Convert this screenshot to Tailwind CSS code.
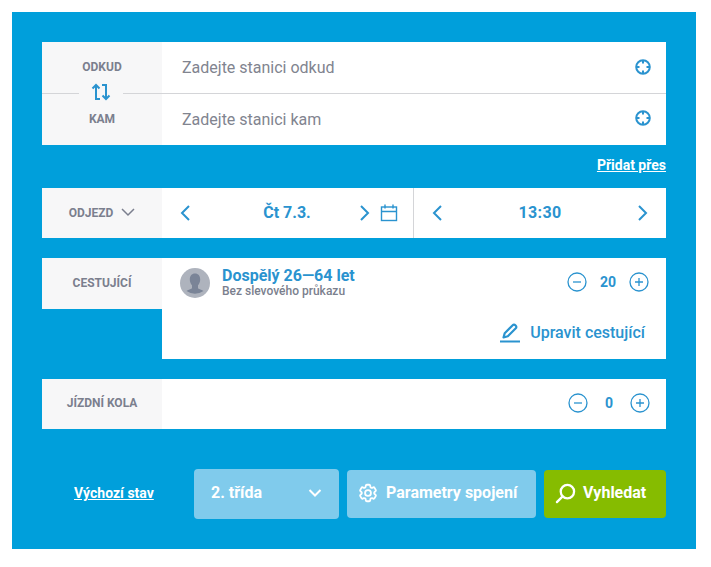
<!DOCTYPE html>
<html lang="cs">

<head>
    <meta charset="UTF-8">
    <meta name="viewport" content="width=device-width, initial-scale=1.0">
    <title>Vyhledání spojení</title>
    <script src="https://cdn.jsdelivr.net/npm/@tailwindcss/browser@4"></script>
</head>

<body class="bg-white font-['Roboto',sans-serif]">
    <div class="pt-3 pl-3">
        <form class="w-[684px] h-[537px] bg-[#009fdb] px-[30px] pt-[30px]">

            <!-- odkud / kam -->
            <div class="relative flex h-[103px] bg-white">
                <div class="w-[120px] bg-[#f7f7f8] flex flex-col text-xs font-bold text-[#7b7f8e]">
                    <div class="h-[51px] flex items-center justify-center pb-[2px]">ODKUD</div>
                    <div class="h-[52px] flex items-center justify-center">KAM</div>
                </div>
                <div class="flex-1 flex flex-col text-base text-[#81848f]">
                    <div class="h-[51px] flex items-center justify-between pl-5 pr-[15px]">
                        <span>Zadejte stanici odkud</span>
                        <svg class="w-4 h-4 mt-[-1px]" viewBox="0 0 16 16" fill="none" stroke="#2a93cf" stroke-width="2"><circle cx="8" cy="8" r="6.800"/><path d="M8 1v3.500M8 11.500V15M1 8h3.500M11.500 8H15"/></svg>
                    </div>
                    <div class="h-[52px] flex items-center justify-between pl-5 pr-[15px] pt-[2px]">
                        <span>Zadejte stanici kam</span>
                        <svg class="w-4 h-4 mt-[-4px]" viewBox="0 0 16 16" fill="none" stroke="#2a93cf" stroke-width="2"><circle cx="8" cy="8" r="6.800"/><path d="M8 1v3.500M8 11.500V15M1 8h3.500M11.500 8H15"/></svg>
                    </div>
                </div>
                <div class="absolute left-0 right-0 top-[51px] h-px bg-[#d4d5d8]"></div>
                <div class="absolute left-[37px] top-[40px] w-[44px] h-[22px] bg-[#f7f7f8] flex items-center justify-center">
                    <svg class="w-5 h-5 mt-[-2px]" viewBox="0 0 20 20" fill="none" stroke="#2a93cf" stroke-width="2"><path d="M9 17H5V3M1.500 6.500L5 3l3.500 3.500M11 3h4v14M11.500 13.500L15 17l3.500-3.500"/></svg>
                </div>
            </div>

            <div class="h-[43px] flex items-center justify-end">
                <a href="#" class="text-sm font-bold text-white underline mt-[-3px]">Přidat přes</a>
            </div>

            <!-- odjezd -->
            <div class="flex h-[50px] bg-white">
                <div class="w-[120px] bg-[#f7f7f8] flex items-center justify-center gap-2 text-xs font-bold text-[#7b7f8e]">
                    <span>ODJEZD</span>
                    <svg class="w-[14px] h-[14px] mt-[-2px]" viewBox="0 0 14 14" fill="none" stroke="#7b7f8e" stroke-width="1.500"><path d="M1 4l6 6 6-6"/></svg>
                </div>
                <div class="w-[252px] flex items-center pl-[18px] pr-[15px] border-r border-[#d4d5d8] text-base font-bold text-[#2a93cf]">
                    <svg class="w-[10px] h-4" viewBox="0 0 10 16" fill="none" stroke="#2a93cf" stroke-width="2"><path d="M9 1L2 8l7 7"/></svg>
                    <span class="flex-1 text-center pl-[24px]">Čt 7.3.</span>
                    <svg class="w-[10px] h-4 mr-[10px]" viewBox="0 0 10 16" fill="none" stroke="#2a93cf" stroke-width="2"><path d="M1 1l7 7-7 7"/></svg>
                    <svg class="w-[18px] h-[18px]" viewBox="0 0 18 18" fill="none" stroke="#2a93cf" stroke-width="1.400"><rect x="1.500" y="3" width="15" height="13.500"/><path d="M1.500 7.500h15M5 .5v4M13 .5v4"/></svg>
                </div>
                <div class="flex-1 flex items-center pl-[18px] pr-[18px] text-base font-bold text-[#2a93cf]">
                    <svg class="w-[10px] h-4" viewBox="0 0 10 16" fill="none" stroke="#2a93cf" stroke-width="2"><path d="M9 1L2 8l7 7"/></svg>
                    <span class="flex-1 text-center tracking-[0.4px]">13:30</span>
                    <svg class="w-[10px] h-4" viewBox="0 0 10 16" fill="none" stroke="#2a93cf" stroke-width="2"><path d="M1 1l7 7-7 7"/></svg>
                </div>
            </div>

            <!-- cestujici -->
            <div class="flex mt-5 h-[101px]">
                <div class="w-[120px] h-[51px] bg-[#f7f7f8] flex items-center justify-center pb-[2px] text-xs font-bold text-[#7b7f8e]">CESTUJÍCÍ</div>
                <div class="flex-1 bg-white flex flex-col">
                    <div class="flex items-center justify-between pt-[10px] pl-[18px] pr-[17px]">
                        <div class="flex items-center gap-[12px]">
                            <svg class="w-[30px] h-[30px]" viewBox="0 0 30 30"><circle cx="15" cy="15" r="15" fill="#aeb3bd"/><path d="M15 5.500c-3.200 0-5.200 2.300-5.200 6 0 2.500 1 4.500 2.200 5.800v2.700c0 1-3.500 1.500-5.500 3a15 15 0 0 0 17 0c-2-1.500-5.500-2-5.500-3v-2.700c1.200-1.300 2.200-3.300 2.200-5.800 0-3.700-2-6-5.200-6z" fill="#7a8497"/></svg>
                            <div class="flex flex-col">
                                <span class="text-base leading-[16px] font-bold text-[#2a93cf]">Dospělý 26—64 let</span>
                                <span class="text-xs leading-[14px] font-medium text-[#7b7f8e]">Bez slevového průkazu</span>
                            </div>
                        </div>
                        <div class="flex items-center text-sm font-bold text-[#2a93cf] mt-[-2px]">
                            <svg class="w-5 h-5" viewBox="0 0 20 20" fill="none" stroke="#2a93cf" stroke-width="1.300"><circle cx="10" cy="10" r="9"/><path d="M6 10h8"/></svg>
                            <span class="w-[42px] text-center">20</span>
                            <svg class="w-5 h-5" viewBox="0 0 20 20" fill="none" stroke="#2a93cf" stroke-width="1.300"><circle cx="10" cy="10" r="9"/><path d="M6 10h8M10 6v8"/></svg>
                        </div>
                    </div>
                    <div class="flex items-center justify-end gap-[10px] mt-[23px] pr-[21px] text-base font-medium text-[#2a93cf]">
                        <svg class="w-5 h-5" viewBox="0 0 20 20" fill="none" stroke="#2a93cf"><path d="M3.500 14.500l1.200-4.300 8-8a1.800 1.800 0 0 1 2.600 0l.5.5a1.800 1.800 0 0 1 0 2.600l-8 8z" stroke-width="2.200" stroke-linejoin="round"/><path d="M0 18.500h20" stroke-width="2"/></svg>
                        <span>Upravit cestující</span>
                    </div>
                </div>
            </div>

            <!-- kola -->
            <div class="flex mt-5 h-[50px] bg-white">
                <div class="w-[120px] bg-[#f7f7f8] flex items-center justify-center pb-[2px] text-xs font-bold text-[#7b7f8e]">JÍZDNÍ KOLA</div>
                <div class="flex-1 flex items-center justify-end pr-4 pb-[2px] text-sm font-bold text-[#2a93cf]">
                    <svg class="w-5 h-5" viewBox="0 0 20 20" fill="none" stroke="#2a93cf" stroke-width="1.300"><circle cx="10" cy="10" r="9"/><path d="M6 10h8"/></svg>
                    <span class="w-[42px] text-center">0</span>
                    <svg class="w-5 h-5" viewBox="0 0 20 20" fill="none" stroke="#2a93cf" stroke-width="1.300"><circle cx="10" cy="10" r="9"/><path d="M6 10h8M10 6v8"/></svg>
                </div>
            </div>

            <!-- tlacitka -->
            <div class="flex items-center h-[50px] mt-10 text-white font-bold">
                <a href="#" class="w-[152px] pl-[32px] text-sm underline pb-[2px]">Výchozí stav</a>
                <div class="w-[145px] h-[50px] rounded bg-[#80cbec] flex items-center justify-between pl-[17px] pr-[17px] pb-[2px] text-base">
                    <span>2. třída</span>
                    <svg class="w-[14px] h-[14px]" viewBox="0 0 14 14" fill="none" stroke="#fff" stroke-width="2"><path d="M1.500 4l5.500 5.500L12.500 4"/></svg>
                </div>
                <div class="w-[189px] h-12 ml-2 rounded bg-[#80cbec] flex items-center gap-[8px] pl-[10px] pb-[2px] text-base">
                    <svg class="w-[22px] h-[22px]" viewBox="0 0 24 24" fill="none" stroke="#fff" stroke-width="2"><path d="M9.594 3.940c.09-.542.56-.94 1.110-.94h2.593c.55 0 1.020.398 1.110.94l.213 1.281c.063.374.313.686.645.870.074.040.147.083.220.127.325.196.720.257 1.075.124l1.217-.456a1.125 1.125 0 0 1 1.370.490l1.296 2.247a1.125 1.125 0 0 1-.260 1.431l-1.003.827c-.293.241-.438.613-.430.992a7.723 7.723 0 0 1 0 .255c-.008.378.137.750.430.991l1.004.827c.424.350.534.955.260 1.430l-1.298 2.247a1.125 1.125 0 0 1-1.369.491l-1.217-.456c-.355-.133-.750-.072-1.076.124a6.470 6.470 0 0 1-.220.128c-.331.183-.581.495-.644.869l-.213 1.281c-.090.543-.560.940-1.110.940h-2.594c-.550 0-1.019-.398-1.110-.940l-.213-1.281c-.062-.374-.312-.686-.644-.870a6.520 6.520 0 0 1-.220-.127c-.325-.196-.720-.257-1.076-.124l-1.217.456a1.125 1.125 0 0 1-1.369-.490l-1.297-2.247a1.125 1.125 0 0 1 .260-1.431l1.004-.827c.292-.240.437-.613.430-.991a6.932 6.932 0 0 1 0-.255c.007-.380-.138-.751-.430-.992l-1.004-.827a1.125 1.125 0 0 1-.260-1.430l1.297-2.247a1.125 1.125 0 0 1 1.370-.491l1.216.456c.356.133.751.072 1.076-.124.072-.044.146-.086.220-.128.332-.183.582-.495.644-.869l.214-1.280Z"/><circle cx="12" cy="12" r="3.200"/></svg>
                    <span class="ml-[-1px]">Parametry spojení</span>
                </div>
                <div class="w-[122px] h-12 ml-2 rounded bg-[#86bc00] flex items-center gap-[7px] pl-[11px] pb-[2px] text-base">
                    <svg class="w-[21px] h-[21px]" viewBox="0 0 22 22" fill="none" stroke="#fff" stroke-width="2.400"><circle cx="13" cy="9" r="7"/><path d="M8 14l-6 6" stroke-linecap="round"/></svg>
                    <span>Vyhledat</span>
                </div>
            </div>
        </form>
    </div>
</body>

</html>
